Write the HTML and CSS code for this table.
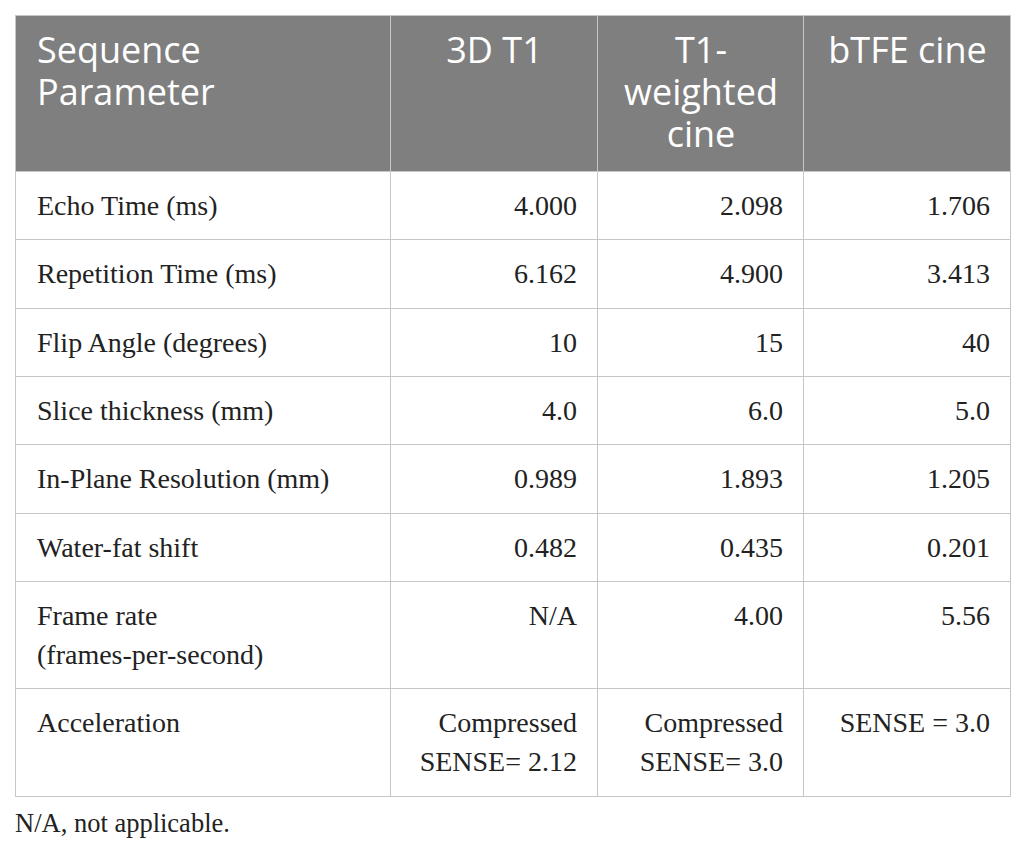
FILE: index.html
```html
<!DOCTYPE html>
<html>
<head>
<meta charset="utf-8">
<link rel="stylesheet" href="styles.css">
</head>
<body>
<table class="params">
  <colgroup>
    <col class="c1"><col class="c2"><col class="c3"><col class="c4">
  </colgroup>
  <thead>
    <tr>
      <th class="first">Sequence<br>Parameter</th>
      <th>3D T1</th>
      <th>T1-<br>weighted<br>cine</th>
      <th>bTFE cine</th>
    </tr>
  </thead>
  <tbody>
    <tr><td>Echo Time (ms)</td><td class="num">4.000</td><td class="num">2.098</td><td class="num">1.706</td></tr>
    <tr><td>Repetition Time (ms)</td><td class="num">6.162</td><td class="num">4.900</td><td class="num">3.413</td></tr>
    <tr><td>Flip Angle (degrees)</td><td class="num">10</td><td class="num">15</td><td class="num">40</td></tr>
    <tr><td>Slice thickness (mm)</td><td class="num">4.0</td><td class="num">6.0</td><td class="num">5.0</td></tr>
    <tr><td>In-Plane Resolution (mm)</td><td class="num">0.989</td><td class="num">1.893</td><td class="num">1.205</td></tr>
    <tr><td>Water-fat shift</td><td class="num">0.482</td><td class="num">0.435</td><td class="num">0.201</td></tr>
    <tr><td>Frame rate<br>(frames-per-second)</td><td class="num">N/A</td><td class="num">4.00</td><td class="num">5.56</td></tr>
    <tr><td>Acceleration</td><td class="num">Compressed<br>SENSE= 2.12</td><td class="num">Compressed<br>SENSE= 3.0</td><td class="num">SENSE = 3.0</td></tr>
  </tbody>
</table>
<p class="note">N/A, not applicable.</p>
</body>
</html>
```

FILE: styles.css
```css
html, body {
  margin: 0;
  padding: 0;
  background: #ffffff;
}
body {
  padding: 15px 0 0 15px;
}
.params {
  border-collapse: collapse;
  table-layout: fixed;
  width: 995px;
}
.c1 { width: 375px; }
.c2 { width: 207px; }
.c3 { width: 206px; }
.c4 { width: 207px; }
.params th,
.params td {
  border: 1px solid #c6c6c6;
  vertical-align: top;
}
.params th {
  background: #7f7f7f;
  color: #ffffff;
  font-family: "Open Sans", "Noto Sans", sans-serif;
  font-weight: 400;
  font-size: 36px;
  line-height: 42px;
  padding: 13px 20px 16px 21px;
  text-align: center;
  white-space: nowrap;
}
.params th.first {
  text-align: left;
}
.params td {
  font-family: "Liberation Serif", "Times New Roman", serif;
  font-size: 28px;
  line-height: 39px;
  color: #222222;
  padding: 14px 20px 14.35px 21px;
}
.params td.num {
  text-align: right;
}
.note {
  margin: 8px 0 0 0;
  font-family: "Liberation Serif", "Times New Roman", serif;
  font-size: 26.5px;
  line-height: 36px;
  color: #222222;
}
```
